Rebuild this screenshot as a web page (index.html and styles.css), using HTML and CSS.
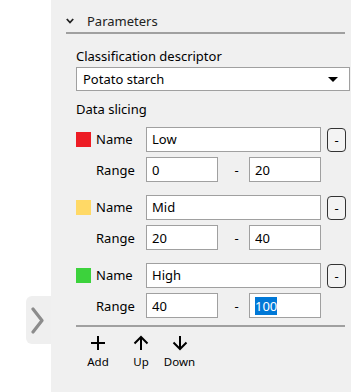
FILE: index.html
```html
<!DOCTYPE html>
<html lang="en">
<head>
    <meta charset="UTF-8">
    <meta name="viewport" content="width=device-width, initial-scale=1.0">
    <title>Parameters</title>
    <link rel="stylesheet" href="styles.css">
</head>
<body>
    <div class="side">
        <div class="side-tab">
            <svg width="13" height="27" viewBox="0 0 13 27"><path d="M2 2 L11 13.5 L2 25" fill="none" stroke="#8c8c8c" stroke-width="3.2" stroke-linecap="round" stroke-linejoin="round"/></svg>
        </div>
    </div>

    <div class="panel">
        <div class="panel-header">
            <svg class="caret" width="8" height="6" viewBox="0 0 8 6"><path d="M0.8 1 L4 4.5 L7.2 1" fill="none" stroke="#222" stroke-width="1.8"/></svg>
            <span>Parameters</span>
        </div>

        <div class="panel-body">
            <label class="field-label" for="descriptor">Classification descriptor</label>
            <div class="combo" id="descriptor">
                <span>Potato starch</span>
                <span class="combo-arrow"></span>
            </div>

            <div class="field-label slicing">Data slicing</div>

            <div class="slice">
                <div class="slice-row">
                    <span class="swatch red"></span>
                    <label>Name</label>
                    <input type="text" class="field" value="Low">
                    <button class="remove">-</button>
                </div>
                <div class="slice-row">
                    <span></span>
                    <label>Range</label>
                    <div class="range">
                        <input type="text" class="field" value="0">
                        <span class="dash">-</span>
                        <input type="text" class="field" value="20">
                    </div>
                </div>
            </div>

            <div class="slice">
                <div class="slice-row">
                    <span class="swatch yellow"></span>
                    <label>Name</label>
                    <input type="text" class="field" value="Mid">
                    <button class="remove">-</button>
                </div>
                <div class="slice-row">
                    <span></span>
                    <label>Range</label>
                    <div class="range">
                        <input type="text" class="field" value="20">
                        <span class="dash">-</span>
                        <input type="text" class="field" value="40">
                    </div>
                </div>
            </div>

            <div class="slice">
                <div class="slice-row">
                    <span class="swatch green"></span>
                    <label>Name</label>
                    <input type="text" class="field" value="High">
                    <button class="remove">-</button>
                </div>
                <div class="slice-row">
                    <span></span>
                    <label>Range</label>
                    <div class="range">
                        <input type="text" class="field" value="40">
                        <span class="dash">-</span>
                        <input type="text" class="field" id="lastValue" value="100">
                    </div>
                </div>
            </div>

            <div class="toolbar">
                <button class="tool">
                    <svg width="16" height="16" viewBox="0 0 16 16"><path d="M8 1 V15 M1 8 H15" stroke="#000" stroke-width="2" fill="none"/></svg>
                    <span>Add</span>
                </button>
                <button class="tool">
                    <svg width="16" height="16" viewBox="0 0 16 16"><path d="M8 15 V2.5 M1.5 8.5 L8 2 L14.5 8.5" stroke="#000" stroke-width="2" fill="none"/></svg>
                    <span>Up</span>
                </button>
                <button class="tool">
                    <svg width="16" height="16" viewBox="0 0 16 16"><path d="M8 1 V13.5 M1.5 7.5 L8 14 L14.5 7.5" stroke="#000" stroke-width="2" fill="none"/></svg>
                    <span>Down</span>
                </button>
            </div>
        </div>
    </div>

    <script>
        const lastValue = document.getElementById('lastValue');
        lastValue.focus();
        lastValue.setSelectionRange(0, lastValue.value.length);
    </script>
</body>
</html>
```

FILE: styles.css
```css
body {
    margin: 0;
    height: 392px;
    display: flex;
    background-color: #fff;
    font-family: "Segoe UI", "Noto Sans", sans-serif;
    font-size: 13px;
    color: #000;
}

.side {
    width: 51px;
    flex: none;
    display: flex;
    flex-direction: column;
    align-items: flex-end;
}

.side-tab {
    margin-top: 296px;
    width: 25px;
    height: 48px;
    box-sizing: border-box;
    padding-right: 2px;
    background-color: #efefef;
    border-radius: 6px 0 0 6px;
    display: flex;
    align-items: center;
    justify-content: center;
}

.panel {
    flex: 1;
    background-color: #f0f0f0;
}

.panel-header {
    margin: 0 6px 0 15px;
    height: 32px;
    padding-top: 10px;
    box-sizing: border-box;
    border-bottom: 2px solid #a0a0a0;
    display: flex;
    align-items: center;
    height: 34px;
    line-height: 20px;
    color: #222;
}

.panel-header .caret {
    margin-right: 13px;
}

.panel-body {
    padding: 0 1px 0 25px;
}

.field-label {
    display: block;
    line-height: 18px;
    margin-top: 13px;
}

.field-label.slicing {
    margin-top: 9px;
}

.combo {
    margin-top: 2px;
    height: 24px;
    box-sizing: border-box;
    border: 1px solid #a0a0a0;
    background-color: #fff;
    display: flex;
    align-items: center;
    justify-content: space-between;
    padding: 0 11px 0 6px;
}

.combo-arrow {
    width: 0;
    height: 0;
    border-left: 5px solid transparent;
    border-right: 5px solid transparent;
    border-top: 5px solid #000;
}

.slice {
    display: grid;
    row-gap: 6px;
    margin-top: 12px;
}

.slicing + .slice {
    margin-top: 8px;
}

.slice-row {
    display: grid;
    grid-template-columns: 20px 50px 175px auto;
    align-items: center;
    height: 25px;
}

.swatch {
    width: 15px;
    height: 15px;
    margin-top: 1px;
}

.swatch.red {
    background-color: #ed1c24;
}

.swatch.yellow {
    background-color: #ffd966;
}

.swatch.green {
    background-color: #3cd23c;
}

.field {
    width: 100%;
    height: 25px;
    box-sizing: border-box;
    margin: 0;
    padding: 0 5px;
    border: 1px solid #a0a0a0;
    border-radius: 0;
    background-color: #fff;
    font-family: inherit;
    font-size: 13px;
    color: #000;
}

.field:focus {
    outline: none;
}

.field::selection {
    background-color: #0078d7;
    color: #fff;
}

.range {
    display: grid;
    grid-template-columns: 72px 31px 72px;
    align-items: center;
}

.dash {
    text-align: center;
    padding-left: 6px;
}

.remove {
    align-self: start;
    width: 19px;
    height: 24px;
    margin: 2px 0 0 6px;
    padding: 0;
    border: 1px solid #333;
    border-radius: 4px;
    background-color: #f3f3f3;
    font-family: inherit;
    font-size: 13px;
    line-height: 20px;
    color: #000;
}

.toolbar {
    margin: 7px 5px 0 0;
    padding-top: 8px;
    border-top: 2px solid #a0a0a0;
    display: grid;
    grid-template-columns: 44px 42px 35px;
}

.tool {
    display: flex;
    flex-direction: column;
    align-items: center;
    padding: 0;
    border: none;
    background: none;
    font-family: inherit;
    font-size: 11.5px;
    line-height: 16px;
    color: #000;
}

.tool span {
    margin-top: 3px;
}
```
